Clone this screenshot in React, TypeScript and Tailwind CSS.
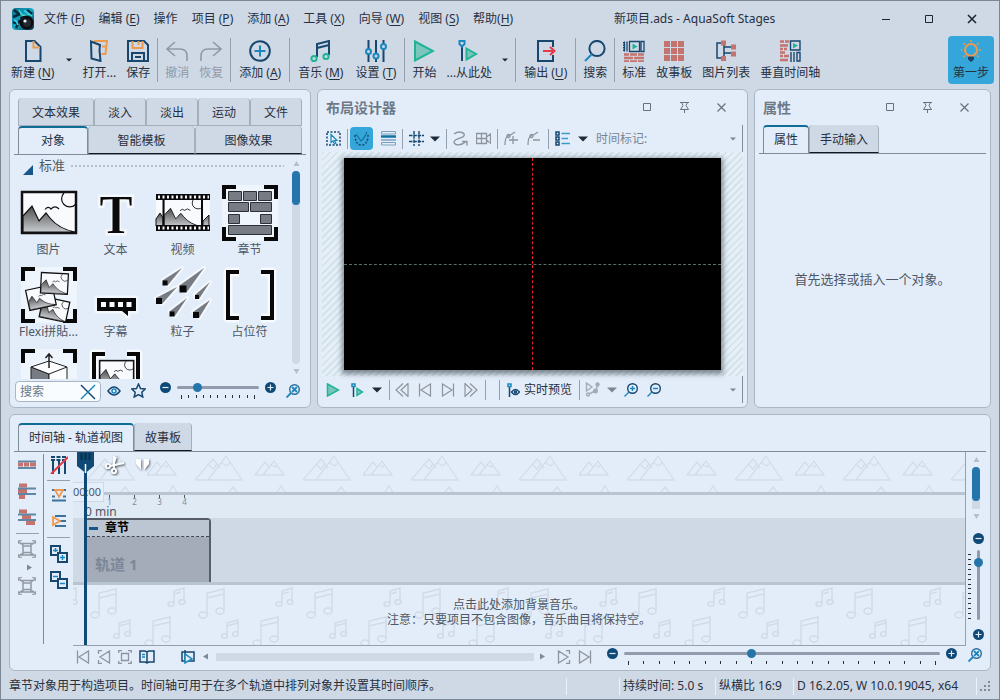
import { clsx } from "clsx";
import type { ReactNode } from "react";

const NAVY = "#17476f";
const BLUE = "#1a87bd";
const ORANGE = "#ee9a4e";
const GREEN = "#1fb497";
const RED = "#e63946";
const BRICK = "#c4736f";
const GREY = "#8d949d";

type IconProps = { w?: number; h?: number; stroke?: string; sw?: number; children: ReactNode };

function Icon({ w = 22, h = 22, stroke = NAVY, sw = 2, children }: IconProps) {
  return (
    <svg width={w} height={h} viewBox={`0 0 ${w} ${h}`} fill="none" stroke={stroke} strokeWidth={sw} className="block shrink-0" aria-hidden="true">
      {children}
    </svg>
  );
}

/* ---------- title bar ---------- */

const MENU = [
  ["文件 (", "F", ")"],
  ["编辑 (", "E", ")"],
  ["操作", "", ""],
  ["项目 (", "P", ")"],
  ["添加 (", "A", ")"],
  ["工具 (", "X", ")"],
  ["向导 (", "W", ")"],
  ["视图 (", "S", ")"],
  ["帮助(", "H", ")"],
];

function Mnemonic({ parts }: { parts: string[] }) {
  return (
    <>
      {parts[0]}
      {parts[1] ? <span className="underline underline-offset-2">{parts[1]}</span> : null}
      {parts[2]}
    </>
  );
}

function Logo() {
  return (
    <svg width="22" height="22" viewBox="0 0 22 22" className="mr-2.5 block shrink-0" aria-hidden="true">
      <defs>
        <linearGradient id="logoSea" x1="0" y1="0" x2="1" y2="1">
          <stop offset="0" stopColor="#0d6f8c" />
          <stop offset="0.5" stopColor="#14a9c9" />
          <stop offset="1" stopColor="#04222f" />
        </linearGradient>
      </defs>
      <rect width="22" height="22" rx="4" fill="url(#logoSea)" />
      <path d="M2 2l5 4M1 9l7-3M4 20l4-8M15 2l5 4M1 14l6 2" stroke="#052b38" strokeWidth="2.5" />
      <path d="M7 2l3 5M10 7l5 1M16 5l4 3" stroke="#4fe0c0" strokeWidth="1.3" />
      <path d="M2 12q3 1 4 5M12 3q3 0 5 4" stroke="#3bd3f5" strokeWidth="1.6" fill="none" />
      <circle cx="14.5" cy="14.5" r="7" fill="#0a0d12" />
      <path d="M8 9l4-1 2 3-5 2z" fill="#10161d" />
      <circle cx="15" cy="15" r="4" fill="#23282f" />
      <circle cx="13" cy="13" r="1.6" fill="#e8f4f8" />
    </svg>
  );
}

function TitleBar() {
  return (
    <header className="flex h-[35px] items-center pl-[11px]">
      <Logo />
      <nav className="flex gap-[14px]">
        {MENU.map((parts) => (
          <button key={parts[0]} className="whitespace-nowrap">
            <Mnemonic parts={parts} />
          </button>
        ))}
      </nav>
      <h1 className="grow whitespace-nowrap pl-3 text-center">新项目.ads - AquaSoft Stages</h1>
      <div className="flex pr-1.5">
        <button aria-label="最小化" className="flex h-8 w-[43px] items-center justify-center">
          <Icon w={10} h={10} stroke="#1c2533" sw={1}><path d="M1 5.5h8" /></Icon>
        </button>
        <button aria-label="最大化" className="flex h-8 w-[43px] items-center justify-center">
          <Icon w={10} h={10} stroke="#1c2533" sw={1}><path d="M1.5 1.5h7v7h-7z" /></Icon>
        </button>
        <button aria-label="关闭" className="flex h-8 w-[43px] items-center justify-center">
          <Icon w={10} h={10} stroke="#1c2533" sw={1.6}><path d="M1 1l8 8M9 1l-8 8" /></Icon>
        </button>
      </div>
    </header>
  );
}

/* ---------- main toolbar ---------- */

const IconNew = (
  <Icon>
    <path d="M4 1h8.500l6 6v14H4z" />
    <path d="M11.500 1v6.500h6.500" stroke={ORANGE} />
  </Icon>
);
const IconOpen = (
  <Icon>
    <path d="M6 1h13l-1.500 13h-4" stroke={ORANGE} />
    <path d="M14 6.500h4" stroke={ORANGE} />
    <path d="M3 1.500l9 3.500-.5 5 1 11-9-2.500z" />
  </Icon>
);
const IconSave = (
  <Icon>
    <path d="M1 1h16l4 4v16H1z" />
    <path d="M5.500 1v7h10V1M11.500 1v4" stroke={ORANGE} />
    <path d="M5 21v-8h12v8M8 17h6" />
  </Icon>
);
const IconUndo = (
  <Icon stroke="#8f9aa6" sw={1.6}>
    <path d="M9 2L1 9l8 7M1 9h13q7 0 7 7v5" />
  </Icon>
);
const IconRedo = (
  <Icon stroke="#8f9aa6" sw={1.6}>
    <path d="M13 2l8 7-8 7M21 9H8q-7 0-7 7v5" />
  </Icon>
);
const IconAdd = (
  <Icon>
    <circle cx="11" cy="11" r="9.800" />
    <path d="M11 5.500v11M5.500 11h11" stroke={BLUE} />
  </Icon>
);
const IconMusic = (
  <Icon>
    <path d="M7 17V4l12-3v14M7 8l12-3" />
    <circle cx="4" cy="18.500" r="2.600" stroke={GREEN} />
    <circle cx="16" cy="16.500" r="2.600" stroke={GREEN} />
  </Icon>
);
const IconSettings = (
  <Icon>
    <path d="M3.500 0v9M3.500 14v8M11 0v13M11 18v4M18.500 0v4M18.500 9v13" />
    <g stroke={BLUE}>
      <circle cx="3.500" cy="11.500" r="2.500" />
      <circle cx="11" cy="16" r="2.500" />
      <circle cx="18.500" cy="6.500" r="2.500" />
    </g>
  </Icon>
);
const IconPlay = (
  <Icon stroke={GREEN}>
    <path d="M2 1.500l18 9.500-18 9.500z" fill="#79c6bd" />
  </Icon>
);
const IconPlayFrom = (
  <Icon>
    <path d="M4 6v15" />
    <path d="M1.500 1h5v3L4 6.500 1.500 4z" stroke={BLUE} />
    <path d="M8.500 8.500l9.500 5.500-9.500 5.500z" stroke={GREEN} fill="#79c6bd" />
  </Icon>
);
const IconExport = (
  <Icon>
    <path d="M18 7V1H3v20h15v-6" />
    <path d="M8 11h11M15 7l4.500 4-4.500 4" stroke={RED} />
  </Icon>
);
const IconSearch = (
  <Icon>
    <circle cx="13" cy="8.500" r="7.600" />
    <path d="M8 14l-7 7" stroke={BLUE} />
  </Icon>
);
const Bricks = ({ y }: { y: number }) => (
  <path d={`M1 ${y}h5m1 0h7m1 0h6M1 ${y + 3.5}h9m1 0h10M1 ${y + 7}h5m1 0h7m1 0h6`} stroke={BRICK} strokeWidth="2.500" />
);
const IconStandard = (
  <Icon sw={1.3}>
    <path d="M1.500 1.500v10M4 1.500v10M18 1.500h3v10h-3zM6.500 1.500h10v10h-10z" />
    <path d="M1 2v10" strokeDasharray="1.500 1" strokeWidth="2" />
    <path d="M9.500 3.500l5 3-5 3z" fill={GREEN} stroke="none" />
    <Bricks y={14.500} />
  </Icon>
);
const IconStoryboard = (
  <Icon stroke="none">
    {[1, 8, 15].map((y) => [1, 8, 15].map((x) => <rect key={`${x}-${y}`} x={x} y={y} width="6" height="6" fill={BRICK} />))}
  </Icon>
);
const IconImageList = (
  <Icon sw={1.5}>
    <path d="M7 3H2v15h5M9 3v13M9 7h8M9 13h8" />
    <path d="M6 .5h5v5H6zM16 4.500h5v5h-5zM16 11.500h5v5h-5zM6 16h5v5H6z" fill={BRICK} stroke="none" />
  </Icon>
);
const IconVertical = (
  <Icon sw={1.4}>
    <path d="M1 1.500h4m1 0h4M1 5.500h8M1 9h3m1 0h3M1 12.500h5M1 16h3m1 0h5M1 20h8" stroke={BRICK} strokeWidth="2.500" />
    <path d="M11.500 1h9.500v9h-9.500zM12 12v10M15 12v10M18 12.500h3v8.500h-3z" />
    <path d="M14 3l5 2.500-5 3z" fill={GREEN} stroke="none" />
  </Icon>
);
const IconBulb = (
  <Icon stroke={ORANGE}>
    <circle cx="11" cy="10" r="6" />
    <path d="M8.500 17h5v2.500l-2.500 2-2.500-2z" fill={NAVY} stroke={NAVY} strokeWidth="1" />
    <path d="M11 0v2M3.500 3l1.500 1.500M18.500 3L17 4.500M1 10h1.500M19.500 10H21M3.500 17L5 15.500M18.500 17L17 15.500" strokeWidth="1.500" />
  </Icon>
);

function ToolButton({ icon, parts, muted }: { icon: ReactNode; parts: string[]; muted?: boolean }) {
  return (
    <button className={clsx("flex flex-col items-center gap-[3px] whitespace-nowrap", parts[1] ? "px-1.5" : "px-[5px]", muted && "text-[#8f99a6]")}>
      {icon}
      <span className="leading-4">
        <Mnemonic parts={parts} />
      </span>
    </button>
  );
}

const Divider = () => <span className="mx-0.5 -mt-0.5 h-11 w-px shrink-0 bg-[#94a0ae]" />;

function Caret({ big, muted }: { big?: boolean; muted?: boolean }) {
  const color = muted ? "#7c8591" : "#1c2a3a";
  return (
    <svg width="10" height="6" viewBox="0 0 10 6" className="block shrink-0" aria-hidden="true">
      <path d={big ? "M0 .5h10L5 5.500z" : "M2 1.500h6L5 4.500z"} fill={color} />
    </svg>
  );
}

function MainToolbar() {
  return (
    <div role="toolbar" className="flex h-[52px] items-start pl-1 pr-[5px] pt-1">
      <ToolButton icon={IconNew} parts={["新建 (", "N", ")"]} />
      <button aria-label="新建选项" className="flex h-10 w-[17px] items-center justify-center"><Caret /></button>
      <ToolButton icon={IconOpen} parts={["打开...", "", ""]} />
      <ToolButton icon={IconSave} parts={["保存", "", ""]} />
      <Divider />
      <ToolButton icon={IconUndo} parts={["撤消", "", ""]} muted />
      <ToolButton icon={IconRedo} parts={["恢复", "", ""]} muted />
      <Divider />
      <ToolButton icon={IconAdd} parts={["添加 (", "A", ")"]} />
      <Divider />
      <ToolButton icon={IconMusic} parts={["音乐 (", "M", ")"]} />
      <ToolButton icon={IconSettings} parts={["设置 (", "T", ")"]} />
      <Divider />
      <ToolButton icon={IconPlay} parts={["开始", "", ""]} />
      <ToolButton icon={IconPlayFrom} parts={["...从此处", "", ""]} />
      <button aria-label="播放选项" className="flex h-10 w-4 items-center justify-center"><Caret /></button>
      <Divider />
      <ToolButton icon={IconExport} parts={["输出 (", "U", ")"]} />
      <Divider />
      <ToolButton icon={IconSearch} parts={["搜索", "", ""]} />
      <Divider />
      <ToolButton icon={IconStandard} parts={["标准", "", ""]} />
      <ToolButton icon={IconStoryboard} parts={["故事板", "", ""]} />
      <ToolButton icon={IconImageList} parts={["图片列表", "", ""]} />
      <ToolButton icon={IconVertical} parts={["垂直时间轴", "", ""]} />
      <button className="-mt-1 ml-auto flex h-12 flex-col items-center gap-[3px] rounded bg-[#35a6d9] px-[5px] pt-1">
        {IconBulb}
        <span className="leading-4">第一步</span>
      </button>
    </div>
  );
}

/* ---------- shared panel pieces ---------- */

function Panel({ className, children }: { className?: string; children: ReactNode }) {
  return <section className={clsx("flex flex-col rounded-md border border-[#a9b6c5] bg-[#e3edf9]", className)}>{children}</section>;
}

function Tab({ active, className, children }: { active?: boolean; className?: string; children: ReactNode }) {
  return (
    <button
      role="tab"
      aria-selected={!!active}
      className={clsx(
        "h-7 whitespace-nowrap rounded-t border-x",
        active
          ? "border-t-2 border-x-[#7f8b99] border-t-[#0f6c97] bg-[#e3edf9]"
          : "border-b border-x-[#a3afbd] border-b-[#101820] bg-[#cfd9e5] pt-0.5",
        className,
      )}
    >
      {children}
    </button>
  );
}

function PanelTitle({ children }: { children: string }) {
  return (
    <div className="flex h-[35px] items-center pl-2 pr-[7px]">
      <h2 className="grow text-sm font-bold text-[#6d7887]">{children}</h2>
      <button aria-label="最大化" className="flex h-6 w-[37px] items-center justify-center">
        <Icon w={9} h={9} stroke="#66717f" sw={1}><path d="M.5 .5h7v7h-7z" /></Icon>
      </button>
      <button aria-label="固定" className="flex h-6 w-[37px] items-center justify-center">
        <Icon w={9} h={11} stroke="#66717f" sw={1}><path d="M0 .5h9M1.500 .5l1.500 3-2.500 4h8l-2.500-4 1.500-3M4.500 7.500v3.500" /></Icon>
      </button>
      <button aria-label="关闭" className="flex h-6 w-[37px] items-center justify-center">
        <Icon w={9} h={9} stroke="#66717f" sw={1.2}><path d="M.5 .5l8 8M8.500 .5l-8 8" /></Icon>
      </button>
    </div>
  );
}

function RoundButton({ label, plus }: { label: string; plus?: boolean }) {
  return (
    <button aria-label={label} className="shrink-0">
      <svg width="11" height="11" viewBox="0 0 11 11" className="block" aria-hidden="true">
        <circle cx="5.500" cy="5.500" r="5.500" fill="#0f4a76" />
        <path d={plus ? "M2.500 5.500h6M5.500 2.500v6" : "M2.500 5.500h6"} stroke="#e3edf9" strokeWidth="1.200" />
      </svg>
    </button>
  );
}

function ZoomReset() {
  return (
    <button aria-label="重置缩放" className="shrink-0">
      <Icon w={14} h={14} sw={1.4} stroke="#2b6d9b">
        <circle cx="8.500" cy="5.500" r="4.800" />
        <path d="M5 9l-4.500 4.500M6 3l5 5M11 3L6 8" stroke={BLUE} strokeWidth="1.800" />
      </Icon>
    </button>
  );
}

function Slider({ label, value, ticks }: { label: string; value: number; ticks: number }) {
  return (
    <div className="flex min-w-0 grow flex-col gap-[3px] pt-px">
      <input
        type="range"
        aria-label={label}
        defaultValue={value}
        className="block h-[9px] w-full appearance-none bg-transparent [&::-webkit-slider-runnable-track]:h-[3px] [&::-webkit-slider-runnable-track]:rounded-full [&::-webkit-slider-runnable-track]:bg-[#909cab] [&::-webkit-slider-thumb]:-mt-[3px] [&::-webkit-slider-thumb]:size-[9px] [&::-webkit-slider-thumb]:appearance-none [&::-webkit-slider-thumb]:rounded-full [&::-webkit-slider-thumb]:bg-[#2475ab]"
      />
      <div className="flex justify-between px-1">
        {Array.from({ length: ticks }, (_, i) => (
          <span key={i} className={clsx("w-px bg-[#26303f]", i === 0 || i === ticks - 1 ? "h-1" : "h-[3px]")} />
        ))}
      </div>
    </div>
  );
}

function ScrollArrow({ dir }: { dir: "up" | "down" | "left" | "right" }) {
  const d = { up: "M3.500 1L6.500 6h-6z", down: "M3.500 6L6.500 1h-6z", left: "M1 3.500L6 .5v6z", right: "M6 3.500L1 .5v6z" }[dir];
  const color = dir === "up" || dir === "down" ? "#b3bfcd" : "#7f8a98";
  return (
    <svg width="7" height="7" viewBox="0 0 7 7" className="block shrink-0" aria-hidden="true">
      <path d={d} fill={color} />
    </svg>
  );
}

/* ---------- toolbox ---------- */

function Landscape() {
  return (
    <g stroke="#111" strokeWidth="1.200" fill="none">
      <rect x="1" y="1" width="54" height="41" fill="#f8fafd" strokeWidth="2.500" />
      <path d="M2 25L11 15l7 15 7-8 4 5q9 11 25 14H2z" fill="url(#hill)" />
      <path d="M43 2a7 7 0 0 0 11.500 11.500M24 18.500q3-4 6-.5q4-4 8 0" />
    </g>
  );
}

const Corners = () => (
  <>
    <rect width="56" height="56" fill="#eff5fc" />
    <path d="M2 14V2h12M42 2h12v12M54 42v12H42M14 54H2V42" fill="none" stroke="#080808" strokeWidth="4" />
  </>
);

const Brackets = () => (
  <>
    <path d="M17 5H6v46h11M39 5h11v46H39" fill="none" stroke="#f7fafe" strokeWidth="9" strokeLinejoin="round" />
    <path d="M17 5H6v46h11M39 5h11v46H39" fill="none" stroke="#080808" strokeWidth="4" />
  </>
);

// x, y, tail x, tail y, half size of the head
const STREAKS = [
  [10, 16, 27, 1, 2.5],
  [28, 22, 49, 1, 3.5],
  [42, 30, 55, 15, 2],
  [4, 34, 22, 20, 3],
  [17, 47, 32, 31, 2.5],
  [41, 48, 55, 33, 3],
];

const TILES: { id: string; name?: string; art: ReactNode }[] = [
  { id: "image", name: "图片", art: <g transform="translate(0 6)"><Landscape /></g> },
  {
    id: "text",
    name: "文本",
    art: (
      <>
        <text x="28" y="48" textAnchor="middle" fill="#0a0a0a" stroke="#f4f8fd" strokeWidth="5" paintOrder="stroke" className="font-['Liberation_Serif',serif] text-[54px]">
          T
        </text>
        <path d="M28 14v32" stroke="#0a0a0a" strokeWidth="7" />
      </>
    ),
  },
  {
    id: "video",
    name: "视频",
    art: (
      <>
        <rect x="1" y="14" width="54" height="27" fill="#f8fafd" />
        <svg x="9" y="14" width="38" height="27" viewBox="2 2 52 38" preserveAspectRatio="none"><Landscape /></svg>
        <path d="M1 34l4-6 3 5v8H1zM48 36l6-6v11h-6z" fill="url(#hill)" stroke="#111" />
        <path d="M8.500 12v30M47 12v30" stroke="#0a0a0a" strokeWidth="2" />
        <path d="M1 12h54M1 43h54" stroke="#0a0a0a" strokeWidth="6" />
        <path d="M3 12h51M3 43h51" stroke="#f4f8fd" strokeWidth="3" strokeDasharray="2 2.500" />
      </>
    ),
  },
  {
    id: "chapter",
    name: "章节",
    art: (
      <>
        <Corners />
        <path d="M6.500 6.500h13v9h-13zM21.500 6.500h13v9h-13zM36.500 6.500h13v9h-13zM6.500 17.500h20v9h-20zM28.500 17.500h21v9h-21zM6.500 29.500h11v9h-11zM38.500 29.500h11v9h-11zM6.500 40.500h43v9h-43z" fill="#777c84" stroke="#2c3036" />
      </>
    ),
  },
  {
    id: "flexi",
    name: "Flexi拼貼...",
    art: (
      <>
        <Corners />
        <g transform="translate(22 29) rotate(12) scale(.5)"><Landscape /></g>
        <g transform="translate(4 23) rotate(-12) scale(.5)"><Landscape /></g>
        <g transform="translate(20 5) rotate(3) scale(.5)"><Landscape /></g>
      </>
    ),
  },
  {
    id: "subtitle",
    name: "字幕",
    art: (
      <>
        <path d="M9 31h39v13h-8v5l-6-5H9z" fill="#080808" stroke="#f2f7fd" strokeWidth="5" strokeLinejoin="round" paintOrder="stroke" />
        <path d="M13 35h5v5h-5zM21.500 35h5v5h-5zM30 35h5v5h-5zM38.500 35h5v5h-5z" fill="#f8fafd" />
      </>
    ),
  },
  {
    id: "particles",
    name: "粒子",
    art: (
      <>
        {STREAKS.map(([x, y, tx, ty, r]) => (
          <g key={`${x}-${y}`}>
            <path d={`M${x - r} ${y - r}L${tx} ${ty}L${x + r} ${y + r}z`} fill="#777c84" stroke="#f4f8fd" strokeWidth="4" strokeLinejoin="round" paintOrder="stroke" />
            <rect x={x - r} y={y - r} width={r * 2} height={r * 2} fill="#080808" />
          </g>
        ))}
      </>
    ),
  },
  { id: "placeholder", name: "占位符", art: <Brackets /> },
  {
    id: "cube",
    art: (
      <>
        <Corners />
        <path d="M10 18l18 7v31H10z" fill="#777c84" stroke="#222" />
        <path d="M10 18l18-6 18 6-18 7zM28 25v31h18V18" fill="#fbfdff" stroke="#222" />
        <path d="M28 19V5M24.500 9L28 5l3.500 4" fill="none" stroke="#222" strokeWidth="1.500" />
      </>
    ),
  },
  {
    id: "image-placeholder",
    art: (
      <>
        <Brackets />
        <g transform="translate(11 11) scale(.63)"><Landscape /></g>
      </>
    ),
  },
];

function Toolbox() {
  return (
    <Panel className="w-[302px] shrink-0 px-1 pb-1 pt-2">
      <div role="tablist" className="flex px-1">
        {["文本效果", "淡入", "淡出", "运动", "文件"].map((name) => (
          <Tab key={name} className="flex-auto border-b-[#a3afbd]!">{name}</Tab>
        ))}
      </div>
      <div role="tablist" className="flex border-b border-[#7f8b99] px-1">
        <Tab active className="-mb-px w-[70px]">对象</Tab>
        <Tab className="flex-auto">智能模板</Tab>
        <Tab className="flex-auto">图像效果</Tab>
      </div>
      <div className="flex h-0 min-h-52 grow">
        <div className="min-w-0 grow overflow-hidden pl-px">
          <div className="flex h-[21px] items-center gap-1.5 pl-2 pr-2 text-[#4d5866]">
            <svg width="10" height="10" viewBox="0 0 10 10" className="mt-2" aria-hidden="true"><path d="M10 0v10H0z" fill="#17578a" /></svg>
            <h3 className="text-[13px]">标准</h3>
            <span className="h-0.5 grow bg-[repeating-linear-gradient(90deg,#b4c0ce_0_2px,transparent_2px_4px)]" />
          </div>
          <ul className="grid grid-cols-[repeat(4,67px)] gap-y-[9px] pt-[9px]">
            {TILES.map((tile) => (
              <li key={tile.id} className="flex flex-col items-center gap-px text-[#4d5866]">
                <svg width="56" height="56" viewBox="0 0 56 56" className="block overflow-visible" aria-hidden="true">{tile.art}</svg>
                {tile.name ? <span className="whitespace-nowrap leading-4">{tile.name}</span> : null}
              </li>
            ))}
          </ul>
        </div>
        <div className="mr-1.5 flex w-2 flex-col items-center gap-1 pb-1 pt-[5px]">
          <ScrollArrow dir="up" />
          <div className="w-2 grow rounded bg-[#cfd9e5]">
            <div className="h-[34px] rounded bg-[#2475ab]" />
          </div>
          <ScrollArrow dir="down" />
        </div>
      </div>
      <div className="flex h-6 items-start gap-2.5 pl-px pr-1.5 pt-0.5">
        <label className="flex h-[21px] w-[86px] shrink-0 items-center rounded border border-[#a9b6c5] bg-[#f8fcff] pl-1 pr-1">
          <input aria-label="搜索" placeholder="搜索" className="w-0 grow bg-transparent outline-none placeholder:text-[#6d7887]" />
          <Icon w={16} h={16} sw={1.5}><path d="M1 1l14 14" stroke={NAVY} /><path d="M15 1L1 15" stroke={BLUE} /></Icon>
        </label>
        <button aria-label="显示" className="-ml-1 mt-1">
          <Icon w={14} h={12} sw={1.5}>
            <path d="M1 6q6-8 12 0q-6 8-12 0z" />
            <circle cx="7" cy="6" r="2" stroke={BLUE} />
          </Icon>
        </button>
        <button aria-label="收藏" className="mt-0.5">
          <Icon w={15} h={15} sw={1.5}><path d="M7.500 1l2 4.500 4.800.5-3.500 3.300 1 4.700-4.300-2.500L3.200 14l1-4.700L.7 6l4.800-.5z" /></Icon>
        </button>
        <div className="flex grow items-start gap-[6px] pl-1 pt-px">
          <RoundButton label="缩小" />
          <Slider label="图标大小" value={22} ticks={11} />
          <RoundButton label="放大" plus />
        </div>
        <div className="pt-[3px]"><ZoomReset /></div>
      </div>
    </Panel>
  );
}

/* ---------- layout designer ---------- */

const MiniDivider = () => <span className="h-5 w-px shrink-0 bg-[#94a0ae]" />;

function LayoutDesigner() {
  return (
    <Panel className="min-w-0 grow px-1 pb-1">
      <div className="-mx-1 shrink-0"><PanelTitle>布局设计器</PanelTitle></div>
      <div role="toolbar" className="flex h-[27px] items-center gap-1.5 border-r border-[#7f8b99] pl-1 text-[#7a8593]">
        <button aria-label="选择">
          <Icon w={15} h={15} sw={1.5}>
            <path d="M1 1h13v13H1z" strokeDasharray="2 1.500" />
            <path d="M5 3.500v8l2-1.500 1.500 3 1.500-.8-1.500-2.700h2.500z" stroke={BLUE} strokeWidth="1.200" />
          </Icon>
        </button>
        <MiniDivider />
        <button aria-label="路径" className="-mx-1 flex size-[23px] items-center justify-center rounded bg-[#35a6d9]">
          <Icon w={15} h={15} sw={1.5}>
            <path d="M1 4v2q1 8 6.500 8T14 6V4" strokeDasharray="2 1.500" />
            <path d="M2 3l5 7q3-2 6-9" stroke="#1b6f9f" strokeWidth="1.200" />
          </Icon>
        </button>
        <button aria-label="图层" className="ml-1.5">
          <Icon w={15} h={15} sw={1.5} stroke="#7ca0bb">
            <path d="M.5 .5h14v2.500H.5zM.5 11.500h14v2.500H.5z" strokeWidth="1" />
            <path d="M0 5.500h15" stroke="#1273a3" strokeWidth="2.500" />
            <path d="M0 9h15" />
          </Icon>
        </button>
        <MiniDivider />
        <button aria-label="网格">
          <Icon w={15} h={15} sw={1.4}><path d="M5 0v15M10 0v15M0 4.500h15M0 10.500h15" strokeDasharray="3.500 .8" /></Icon>
        </button>
        <button aria-label="网格选项"><Caret big /></button>
        <MiniDivider />
        <button aria-label="曲线">
          <Icon w={15} h={15} sw={1.4} stroke={GREY}><path d="M1 3q4-3 8-1.500t1 4.500L3 8.500q-4 3 0 5 5 1.500 10-3M9 10.500h5v4" /></Icon>
        </button>
        <button aria-label="镜头" className="ml-0.5">
          <Icon w={15} h={15} sw={1.3} stroke={GREY}><path d="M.5 2.500h10v10H.5zM5.500 3v9M1 7.500h9M10.500 6l4-3v9l-4-3" /></Icon>
        </button>
        <MiniDivider />
        <button aria-label="添加关键点">
          <Icon w={15} h={15} sw={1.3} stroke={GREY}><path d="M1 14q0-8 3-9t7-4M9 5v8M5 9h9" /><circle cx="4.500" cy="5" r="1.500" /></Icon>
        </button>
        <button aria-label="删除关键点" className="ml-0.5">
          <Icon w={15} h={15} sw={1.3} stroke={GREY}><path d="M1 14q0-8 3-9t7-4M6 9h7" /><circle cx="4.500" cy="5" r="1.500" /></Icon>
        </button>
        <MiniDivider />
        <button aria-label="列表">
          <Icon w={15} h={15} sw={1.5}>
            <path d="M1 1h3v3H1zM1 6h3v3H1zM1 11h3v3H1z" />
            <path d="M6.500 2.500H15M6.500 7.500H13M6.500 12.500H15" stroke="#3a9bc9" />
          </Icon>
        </button>
        <button aria-label="列表选项" className="ml-0.5"><Caret big /></button>
        <span className="ml-0.5 grow">时间标记:</span>
        <button aria-label="时间标记" className="mr-1"><Caret muted /></button>
      </div>
      <div className="flex min-h-0 grow bg-[repeating-linear-gradient(135deg,#d3e3ea_0_2px,#e6eff8_2px_5px)] px-[22px] py-1.5">
        <div className="flex grow flex-col bg-black shadow-[0_2px_5px_2px_rgba(70,80,90,0.65)]">
          <div className="flex grow justify-center border-b border-dashed border-[#5b6b6b]">
            <span className="border-l border-dashed border-[#e11d2e]" />
          </div>
          <div className="flex grow justify-center">
            <span className="border-l border-dashed border-[#e11d2e]" />
          </div>
        </div>
      </div>
      <div role="toolbar" className="flex h-[27px] items-center gap-[7px] border-r border-[#7f8b99] pl-1">
        <button aria-label="播放">
          <Icon w={14} h={14} stroke={GREEN} sw={1.5}><path d="M1.500 1l11 6-11 6z" fill="#79c6bd" /></Icon>
        </button>
        <button aria-label="从此处播放" className="ml-1">
          <Icon w={14} h={14} sw={1.5}>
            <path d="M2.500 4v10" /><path d="M1 1h3v2.500H1z" stroke={BLUE} />
            <path d="M6 5.500l5.500 3.500L6 12.500z" stroke={GREEN} fill="#79c6bd" />
          </Icon>
        </button>
        <button aria-label="播放选项"><Caret big /></button>
        <MiniDivider />
        <button aria-label="快退" className="-ml-0.5"><Icon w={14} h={14} stroke={GREY} sw={1.2}><path d="M8 .5L1 7l7 6.500M13 .5L6 7l7 6.500z" /></Icon></button>
        <button aria-label="上一个" className="ml-0.5"><Icon w={14} h={14} stroke={GREY} sw={1.2}><path d="M1.500 .5v13M12.500 1v12L3 7z" /></Icon></button>
        <button aria-label="下一个" className="ml-0.5"><Icon w={14} h={14} stroke={GREY} sw={1.2}><path d="M12.500 .5v13M1.500 1v12L11 7z" /></Icon></button>
        <button aria-label="快进" className="ml-0.5"><Icon w={14} h={14} stroke={GREY} sw={1.2}><path d="M6 .5L13 7l-7 6.500M1 .5L8 7l-7 6.500z" /></Icon></button>
        <MiniDivider />
        <span className="ml-1.5 h-5 w-px bg-[#94a0ae]" />
        <button className="flex items-center gap-1 whitespace-nowrap">
          <Icon w={13} h={14} sw={1.5}>
            <path d="M2.500 4v10" /><path d="M1 1h3v2.500H1z" stroke={BLUE} />
            <path d="M4.500 9q4-5 8 0q-4 5-8 0z" /><circle cx="8.500" cy="9" r="1" />
          </Icon>
          实时预览
        </button>
        <MiniDivider />
        <button aria-label="运动路径" className="-ml-0.5">
          <Icon w={15} h={15} stroke="#a3abb5" sw={1.4}>
            <path d="M1.500 1v8L7 5z" />
            <path d="M12.500 3.500l-1.500 5-7 3.500" />
            <circle cx="12.500" cy="2.500" r="1.500" fill="#a3abb5" /><circle cx="10.500" cy="9" r="1.800" fill="#a3abb5" /><circle cx="3" cy="12.500" r="1.500" />
          </Icon>
        </button>
        <button aria-label="路径选项"><Caret big muted /></button>
        <button aria-label="放大"><Icon w={14} h={14} sw={1.4}><circle cx="8.500" cy="5.500" r="4.800" /><path d="M5 9L.5 13.500M6 5.500h5M8.500 3v5" stroke={BLUE} /></Icon></button>
        <button aria-label="缩小" className="ml-0.5"><Icon w={14} h={14} sw={1.4}><circle cx="8.500" cy="5.500" r="4.800" /><path d="M5 9L.5 13.500M6 5.500h5" stroke={BLUE} /></Icon></button>
        <button aria-label="更多" className="ml-auto mr-1"><Caret muted /></button>
      </div>
    </Panel>
  );
}

function Properties() {
  return (
    <Panel className="w-[237px] shrink-0">
      <PanelTitle>属性</PanelTitle>
      <div role="tablist" className="mx-1 flex border-b border-[#7f8b99] px-1">
        <Tab active className="-mb-px px-[10px]">属性</Tab>
        <Tab className="px-[10px]">手动输入</Tab>
      </div>
      <p className="flex grow items-center justify-center pb-0.5 text-[13px] text-[#4d5866]">首先选择或插入一个对象。</p>
    </Panel>
  );
}

/* ---------- timeline ---------- */

function MountainBand() {
  return (
    <svg width="100%" height="40" className="block" aria-hidden="true">
      <defs>
        <pattern id="mountains" width="108" height="40" patternUnits="userSpaceOnUse">
          <g fill="none" stroke="#d3dde9" strokeWidth="1.300">
            <path d="M14 28L32 7l7 9M14 28h47L45 4 27 28M28 13l4 4 4-5M41 11l5 3 4-4" />
            <path d="M74 23l10-13 4 5M74 23h29L93 9 82 23M90 13l4 2 2-2" />
            <path d="M48 40l4-5 4 5M96 40l4-6 4 6" />
          </g>
        </pattern>
      </defs>
      <rect width="100%" height="40" fill="url(#mountains)" />
    </svg>
  );
}

function NoteBand() {
  return (
    <svg width="100%" height="60" className="block" aria-hidden="true">
      <defs>
        <pattern id="notes" width="108" height="60" patternUnits="userSpaceOnUse">
          <g fill="none" stroke="#d0dbe7" strokeWidth="1.500">
            <path d="M26 29V8l17-4v21M26 13l17-4" />
            <ellipse cx="22" cy="30" rx="4" ry="3" /><ellipse cx="39" cy="26" rx="4" ry="3" />
            <path d="M80 57V36l17-4v21M80 41l17-4" />
            <ellipse cx="76" cy="58" rx="4" ry="3" /><ellipse cx="93" cy="54" rx="4" ry="3" />
            <path d="M101 18V6l10-3v13M101 9l7-2M-7 6l10-3v13" />
            <ellipse cx="98" cy="19" rx="3" ry="2.200" /><ellipse cx="109" cy="17" rx="3" ry="2.200" /><ellipse cx="1" cy="17" rx="3" ry="2.200" />
            <path d="M46 50V38l11-3v13M46 41l11-3" />
            <ellipse cx="43.500" cy="51" rx="2.800" ry="2.200" /><ellipse cx="54.500" cy="49" rx="2.800" ry="2.200" />
          </g>
        </pattern>
      </defs>
      <rect width="100%" height="60" fill="url(#notes)" />
    </svg>
  );
}

const TrackIcon = ({ d }: { d: string }) => (
  <Icon w={18} h={16} stroke="#5f87a6">
    <path d={d} stroke={BRICK} strokeWidth="4" />
    <path d="M0 5.500h18M0 11h18" />
  </Icon>
);

const GroupIcon = (
  <Icon w={18} h={18} stroke="#9199a3" sw={1.5}>
    <path d="M5 6h8v6.500H5zM3 3.500h12M3 15h12M5 3v12M13 3v12M0 1l4 3.500M18 1l-4 3.500M0 17l4-3.500M18 17l-4-3.500" />
    <path d="M.7 4V.7H4M14 .7h3.300V4M.7 14v3.300H4M14 17.300h3.300V14" strokeWidth="1" />
  </Icon>
);

function TimelineTools() {
  return (
    <div className="flex shrink-0">
      <div className="flex w-[26px] flex-col items-center gap-2.5 pt-[5px]">
        <button aria-label="轨道">
          <Icon w={18} h={16} stroke="#5f87a6"><path d="M0 4.500h18M0 11h18" /><path d="M0 7.500h5m1 0h5m1 0h6" stroke={BRICK} strokeWidth="4" /></Icon>
        </button>
        <button aria-label="左对齐"><TrackIcon d="M1 2.500h8M0 8h9M1 14h6" /></button>
        <button aria-label="错开"><TrackIcon d="M1 2.500h8M4 8h9M8 14h9" /></button>
        <span className="-my-0.5 h-px w-[23px] shrink-0 bg-[#94a0ae]" />
        <button aria-label="分组" className="-mt-0.5">{GroupIcon}</button>
        <span className="-my-1 pl-1"><ScrollArrow dir="right" /></span>
        <button aria-label="取消分组">{GroupIcon}</button>
      </div>
      <span className="my-0.5 ml-[3px] w-px bg-[#7f8b99]" />
      <div className="flex w-[29px] flex-col items-center gap-2.5 pt-1">
        <button aria-label="轨道开关">
          <Icon w={18} h={18}><path d="M1 1h16M1 4h16" strokeDasharray="4 1.500" /><path d="M3 5v13M9 5v13M15 5v13" /><path d="M1 18L18 1" stroke={RED} /></Icon>
        </button>
        <span className="-my-1 h-px w-[23px] bg-[#94a0ae]" />
        <button aria-label="插入" className="mt-px"><Icon w={14} h={14} stroke="#3c729c" sw={1.8}><path d="M0 2h14M0 8.500h3M11 8.500h3M0 12.500h14" /><path d="M3 2h8L7 9z" stroke={ORANGE} fill="#e3edf9" /></Icon></button>
        <button aria-label="追加" className="mt-px"><Icon w={14} h={16} stroke="#3c729c" sw={1.8}><path d="M3 3h11M7 8h7M3 13h11" /><path d="M1 4v8l7-4z" stroke={ORANGE} fill="#e3edf9" /></Icon></button>
        <span className="-my-0.5 h-px w-[23px] bg-[#94a0ae]" />
        <button aria-label="全部展开" className="-mt-px"><Icon w={18} h={18}><path d="M1 1h9v9H1z" /><path d="M8 8h9v9H8z" fill="#e3edf9" /><path d="M3 5.500h5M5.500 3v4M10 12.500h5M12.500 10v5" stroke={BLUE} strokeWidth="1.500" /></Icon></button>
        <button aria-label="全部折叠" className="-mt-0.5"><Icon w={18} h={18}><path d="M1 1h9v9H1z" /><path d="M8 8h9v9H8z" fill="#e3edf9" /><path d="M3 5.500h5M10 12.500h5" stroke={BLUE} strokeWidth="1.500" /></Icon></button>
      </div>
    </div>
  );
}

function TimelineCanvas() {
  return (
    <div className="relative flex min-w-0 grow flex-col overflow-hidden border-b border-r border-[#94a0ae]">
      <MountainBand />
      <div className="ml-[29px] h-[3px] bg-[#b8c4d1]" />
      <div className="flex h-[23px] flex-col bg-[#e0eaf5] text-[#4d5866]">
        <ol className="ml-[24px] flex text-[8px] leading-[8px] text-[#7f8b99]">
          {[1, 2, 3, 4].map((n) => (
            <li key={n} className="flex w-[25px] flex-col items-center">
              <span className="h-[3px] w-px bg-[#4d5866]" />
              {n}
            </li>
          ))}
        </ol>
        <span className="pl-3 leading-3">0 min</span>
      </div>
      <div className="flex grow flex-col border-b-3 border-[#b8c4d1] bg-[#cfd9e5]">
        <div className="ml-3 flex w-[126px] grow flex-col rounded-t border-2 border-b-0 border-[#565d68] bg-[#a4abb9]">
          <h3 className="flex h-[17px] items-center gap-[7px] border-b border-dashed border-[#3f4854] bg-[#bcc6d3] pl-0.5 font-bold text-black">
            <span className="h-[3px] w-[9px] bg-[#17578a]" />
            章节
          </h3>
          <p className="flex grow items-center pl-2 pt-2 text-[15px] font-bold text-[#7c8797]">轨道 1</p>
        </div>
      </div>
      <div className="relative">
        <NoteBand />
        <p className="absolute inset-x-0 top-3 text-center leading-[15px] text-[#4d5866]">
          点击此处添加背景音乐。
          <br />
          注意：只要项目不包含图像，音乐曲目将保持空。
        </p>
      </div>
      <span className="absolute left-0 top-[30px] border border-l-0 border-[#cfd9e5] bg-[#e6effa] pr-0.5 text-[11px] leading-[18px] text-[#4d5866]">00:00</span>
      <div className="absolute bottom-0 left-[11px] top-0 w-[3px] bg-[#0f4a76]" />
      <svg width="80" height="24" viewBox="0 0 80 24" className="absolute left-1 top-0" aria-hidden="true">
        <path d="M0 0h17v14l-8.500 7L0 14z" fill="#0f4a76" />
        <path d="M4.500 1v7M8.500 1v7M12.500 1v7" stroke="#07304f" strokeWidth="2" />
        <path d="M8.500 12v9" stroke="#fff" strokeWidth="1.500" />
        <g className="drop-shadow-[1px_1px_1px_rgba(50,60,70,0.9)]" stroke="#fff" fill="none" strokeWidth="1.800">
          <circle cx="31" cy="14" r="2.200" /><circle cx="37" cy="19" r="2.200" />
          <path d="M33 14l14-3M37 17V4M36 14l3-9" />
        </g>
        <path d="M59 7h5v11l-5-6zM72 7h-5v11l5-6z" fill="#fff" className="drop-shadow-[1px_1px_1px_rgba(50,60,70,0.7)]" />
      </svg>
    </div>
  );
}

function TimelineSide() {
  return (
    <div className="flex w-5 shrink-0 flex-col items-end pr-0.5">
      <div className="mr-1 flex h-[68px] flex-col items-center gap-1 pt-1">
        <ScrollArrow dir="up" />
        <div className="w-2 grow rounded-t bg-[#cfd9e5]"><div className="h-[34px] rounded bg-[#2475ab]" /></div>
        <ScrollArrow dir="down" />
      </div>
      <div className="mt-[13px] flex grow flex-col items-end gap-1.5 pb-1.5">
        <RoundButton label="缩小轨道" />
        <div className="flex grow items-stretch gap-[3px]">
          <div className="flex flex-col justify-between py-1">
            {Array.from({ length: 14 }, (_, i) => (
              <span key={i} className="h-px w-[3px] bg-[#26303f]" />
            ))}
          </div>
          <input
            type="range"
            aria-label="轨道高度"
            defaultValue={13}
            className="mr-px h-[70px] w-[9px] appearance-none bg-transparent [writing-mode:vertical-lr] [&::-webkit-slider-runnable-track]:w-[3px] [&::-webkit-slider-runnable-track]:rounded-full [&::-webkit-slider-runnable-track]:bg-[#909cab] [&::-webkit-slider-thumb]:-ml-[3px] [&::-webkit-slider-thumb]:size-[9px] [&::-webkit-slider-thumb]:appearance-none [&::-webkit-slider-thumb]:rounded-full [&::-webkit-slider-thumb]:bg-[#2475ab]"
          />
        </div>
        <RoundButton label="放大轨道" plus />
      </div>
    </div>
  );
}

function TimelineFooter() {
  return (
    <div className="flex h-[21px] items-center gap-[7px] pl-[62px] pr-1">
      <button aria-label="开头"><Icon w={14} h={14} stroke={GREY} sw={1.3}><path d="M1.500 .5v13M12.500 1v12L3 7z" /></Icon></button>
      <button aria-label="选区开头"><Icon w={14} h={14} stroke={GREY} sw={1.3}><path d="M1.500 4V.7H5M1.500 10v3.500H5M12.500 1v12L3 7z" /></Icon></button>
      <button aria-label="适应"><Icon w={14} h={14} stroke={GREY} sw={1.3}><path d="M3.500 3.500h7v7h-7zM.7 3V.7H4M10 .7h3.300V3M.7 11v2.300H4M10 13.300h3.300V11" /></Icon></button>
      <button aria-label="书册"><Icon w={16} h={14} sw={1.5}><path d="M8 2v11M1 1h5l2 1 2-1h5v11h-5l-2 1-2-1H1z" /><path d="M3 4.500h3M3 7h3" stroke={BLUE} /></Icon></button>
      <button aria-label="跟随" className="ml-[19px]"><Icon w={14} h={14} sw={1.5}><path d="M1 2h12v9H1zM4 0v12" /><path d="M4 4v9l7-4z" stroke={BLUE} fill="#e3edf9" /></Icon></button>
      <button aria-label="向左滚动"><ScrollArrow dir="left" /></button>
      <div className="h-2 min-w-0 flex-10 bg-[#cfd9e5]" />
      <button aria-label="向右滚动" className="-ml-0.5"><ScrollArrow dir="right" /></button>
      <button aria-label="选区结尾" className="ml-1"><Icon w={14} h={14} stroke={GREY} sw={1.3}><path d="M12.500 4V.7H9M12.500 10v3.500H9M1.500 1v12L11 7z" /></Icon></button>
      <button aria-label="结尾"><Icon w={14} h={14} stroke={GREY} sw={1.3}><path d="M12.500 .5v13M1.500 1v12L11 7z" /></Icon></button>
      <div className="ml-2 flex min-w-0 flex-11 items-start gap-[6px]">
        <RoundButton label="缩小时间轴" />
        <Slider label="时间轴缩放" value={40} ticks={21} />
        <RoundButton label="放大时间轴" plus />
      </div>
      <span className="ml-1"><ZoomReset /></span>
    </div>
  );
}

function Timeline() {
  return (
    <Panel className="h-[257px] shrink-0 px-1 pb-[3px] pt-2">
      <div role="tablist" className="flex border-b border-[#7f8b99] px-1">
        <Tab active className="-mb-px px-[10px]">时间轴 - 轨道视图</Tab>
        <Tab className="px-[10px]">故事板</Tab>
      </div>
      <div className="flex min-h-0 grow">
        <TimelineTools />
        <TimelineCanvas />
        <TimelineSide />
      </div>
      <TimelineFooter />
    </Panel>
  );
}

/* ---------- status bar ---------- */

function StatusBar() {
  return (
    <footer className="flex h-7 items-center gap-[3px] whitespace-nowrap pl-2 pr-2 pt-0.5">
      <span className="grow">章节对象用于构造项目。时间轴可用于在多个轨道中排列对象并设置其时间顺序。</span>
      <span className="mr-[49px] h-[17px] w-px bg-[#e9f1fa]" />
      <span className="h-[17px] w-px bg-[#e9f1fa]" />
      <span className="w-[89px]">持续时间: 5.0 s</span>
      <span className="h-[17px] w-px bg-[#e9f1fa]" />
      <span className="w-[71px]">纵横比 16:9</span>
      <span className="h-[17px] w-px bg-[#e9f1fa]" />
      <span className="w-[176px]">D 16.2.05, W 10.0.19045, x64</span>
      <span className="h-[17px] w-px bg-[#e9f1fa]" />
      <Icon w={11} h={11} stroke="none">
        <path d="M8 0h2v2H8zM4 4h2v2H4zM8 4h2v2H8zM0 8h2v2H0zM4 8h2v2H4zM8 8h2v2H8z" fill="#7f8b99" />
      </Icon>
    </footer>
  );
}

export default function App() {
  return (
    <div className="flex min-h-screen w-full flex-col border border-[#7b8794] bg-[#cfd9e5] font-['Noto_Sans','Noto_Sans_CJK_SC',sans-serif] text-xs text-[#26303f]">
      <svg width="0" height="0" className="absolute" aria-hidden="true">
        <defs>
          <linearGradient id="hill" x1="0" y1="0" x2="0" y2="1">
            <stop offset="0" stopColor="#4a4a4a" />
            <stop offset="1" stopColor="#c9ccd0" />
          </linearGradient>
        </defs>
      </svg>
      <TitleBar />
      <MainToolbar />
      <main className="flex grow flex-col gap-1.5 px-2 pt-px">
        <div className="flex grow gap-1.5">
          <Toolbox />
          <LayoutDesigner />
          <Properties />
        </div>
        <Timeline />
      </main>
      <StatusBar />
    </div>
  );
}
